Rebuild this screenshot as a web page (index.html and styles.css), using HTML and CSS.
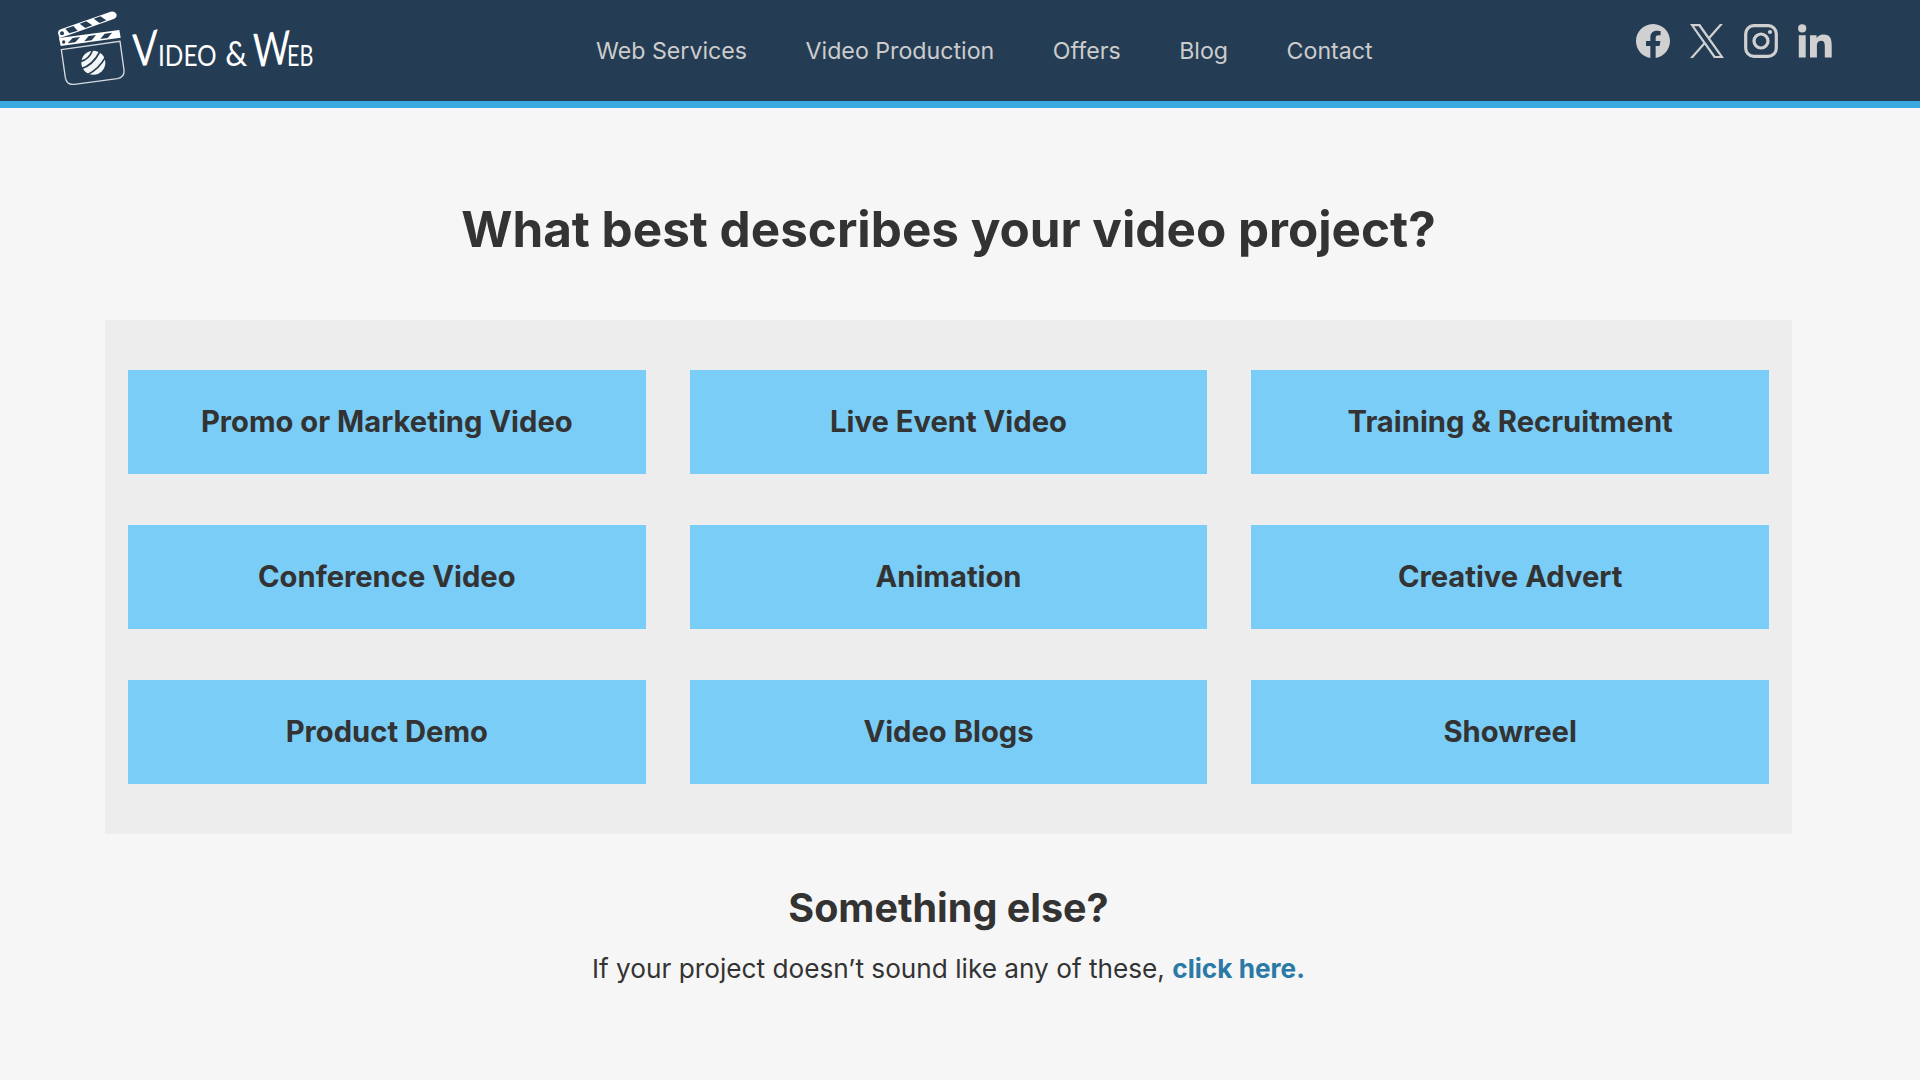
FILE: index.html
```html
<!DOCTYPE html>
<html lang="en">
<head>
    <meta charset="UTF-8">
    <meta name="viewport" content="width=device-width, initial-scale=1.0">
    <title>Start a Video Project | Video &amp; Web</title>
    <link rel="stylesheet" href="styles.css">
</head>
<body>
    <header class="header">
        <a href="#" class="logo" aria-label="Video &amp; Web">
            <svg viewBox="0 0 900 300">
                <!-- clapper arm -->
                <path d="M54 98 Q54 91 62 88 L212 35 Q225 33 230 44 Q231 52 223 56 L78 108 L58 114 Z" fill="#fff"/>
                <g class="logo-dark">
                    <path d="M76 86 L100 78 L113 92 L88 100 Z"/>
                    <path d="M119 71 L139 64 L157 76 L136 84 Z"/>
                    <path d="M161 56 L181 49 L199 61 L179 69 Z"/>
                    <circle cx="66" cy="100" r="6"/>
                </g>
                <!-- slate bar -->
                <path d="M57 114 L238 90 L242 113 L62 138 Z" fill="#fff"/>
                <g class="logo-dark">
                    <path d="M98 114 L120 111 L106 127 L83 130 Z"/>
                    <path d="M146 108 L168 105 L155 121 L133 124 Z"/>
                    <path d="M194 101 L216 98 L203 114 L181 117 Z"/>
                    <circle cx="71" cy="126" r="5"/>
                </g>
                <path class="logo-line" d="M64 149 L240 124 L252 210 Q254 232 232 236 L103 253 Q80 256 76 233 Z"/>
                <!-- striped ball -->
                <circle cx="160" cy="188" r="36" fill="#f4f5f7"/>
                <g class="logo-ball">
                    <path d="M122 184 Q146 180 158 150"/>
                    <path d="M124 206 Q158 196 179 156"/>
                    <path d="M142 224 Q176 208 196 172"/>
                </g>
                <g class="logo-text">
                    <text x="276" y="197" font-size="140" textLength="77" lengthAdjust="spacingAndGlyphs" transform="translate(0 66.5) skewY(-12)">V</text>
                    <text x="354" y="197" font-size="85" textLength="176" lengthAdjust="spacingAndGlyphs">IDEO</text>
                    <text x="556" y="197" font-size="102" textLength="66" lengthAdjust="spacingAndGlyphs">&amp;</text>
                    <text x="638" y="197" font-size="140" textLength="112" lengthAdjust="spacingAndGlyphs" transform="translate(0 72.6) skewY(-6)">W</text>
                    <text x="741" y="197" font-size="85" textLength="79" lengthAdjust="spacingAndGlyphs">EB</text>
                </g>
            </svg>
        </a>
        <nav class="nav">
            <a href="#">Web Services</a>
            <a href="#">Video Production</a>
            <a href="#">Offers</a>
            <a href="#">Blog</a>
            <a href="#">Contact</a>
        </nav>
        <div class="social">
            <a href="#" aria-label="Facebook">
                <svg viewBox="0 0 16 16"><path d="M16 8.049c0-4.446-3.582-8.05-8-8.05C3.58 0-.002 3.603-.002 8.05c0 4.017 2.926 7.347 6.75 7.951v-5.625h-2.03V8.05H6.75V6.275c0-2.017 1.195-3.131 3.022-3.131.876 0 1.791.157 1.791.157v1.98h-1.009c-.993 0-1.303.621-1.303 1.258v1.51h2.218l-.354 2.326H9.25V16c3.824-.604 6.75-3.934 6.75-7.951"/></svg>
            </a>
            <a href="#" aria-label="X">
                <svg viewBox="1 1 22 22"><path d="M14.095 10.316L22.286 1h-1.94l-7.116 8.088L7.551 1H1l8.59 12.231L1 23h1.94l7.51-8.543L16.449 23H23zM11.437 13.338l-.872-1.219L3.64 2.432h2.982l5.59 7.821.867 1.219 7.265 10.166h-2.981z"/></svg>
            </a>
            <a href="#" aria-label="Instagram">
                <svg viewBox="0 0 34 34">
                    <rect class="outline" x="1.7" y="1.7" width="30.6" height="30.6" rx="8"/>
                    <circle class="outline" cx="17" cy="17" r="7"/>
                    <circle cx="26" cy="8" r="2.1"/>
                </svg>
            </a>
            <a href="#" aria-label="LinkedIn">
                <svg viewBox="0 0 34 34">
                    <circle cx="4.2" cy="4.4" r="4.1"/>
                    <path d="M.8 11.2h6.9v22.3H.8zM12 11.2h6.6v3.1c1-1.9 3.3-3.7 6.8-3.7 7 0 8.3 4.6 8.3 10.6v12.3h-6.9V22.6c0-2.6 0-5.9-3.6-5.9s-4.3 2.8-4.3 5.7v11.1H12z"/>
                </svg>
            </a>
        </div>
    </header>

    <main class="content">
        <h1>What best describes your video project?</h1>
        <div class="options">
            <a href="#" class="option">Promo or Marketing Video</a>
            <a href="#" class="option">Live Event Video</a>
            <a href="#" class="option">Training &amp; Recruitment</a>
            <a href="#" class="option">Conference Video</a>
            <a href="#" class="option">Animation</a>
            <a href="#" class="option">Creative Advert</a>
            <a href="#" class="option">Product Demo</a>
            <a href="#" class="option">Video Blogs</a>
            <a href="#" class="option">Showreel</a>
        </div>
        <h2>Something else?</h2>
        <p>If your project doesn’t sound like any of these, <a href="#" class="more-link">click here.</a></p>
    </main>
</body>
</html>
```
FILE: styles.css
```css
* {
    box-sizing: border-box;
}

body {
    margin: 0;
    font-family: Inter, "Liberation Sans", sans-serif;
    background-color: #f6f6f6;
    color: #333;
}

a {
    text-decoration: none;
}

.header {
    display: flex;
    align-items: flex-start;
    height: 108px;
    padding-left: 40px;
    padding-right: 88px;
    background-color: #243d55;
    border-bottom: 7px solid #3aa9e2;
}

.logo svg {
    display: block;
    width: 300px;
    height: 100px;
}

.logo-dark {
    fill: #243d55;
}

.logo-line {
    fill: none;
    stroke: #d5dae0;
    stroke-width: 4;
}

.logo-ball {
    fill: none;
    stroke: #243d55;
    stroke-width: 5;
}

.logo-text {
    font-family: Lato, "Liberation Sans", sans-serif;
    fill: #fff;
}

.nav {
    display: flex;
    gap: 58.5px;
    margin-left: 256px;
    padding-top: 31px;
}

.nav a {
    color: #ccc;
    font-size: 23.2px;
    line-height: 40px;
    white-space: nowrap;
}

.nav a:hover {
    color: #fff;
}

.social {
    display: flex;
    gap: 20px;
    margin-left: auto;
    padding-top: 24px;
}

.social svg {
    display: block;
    width: 34px;
    height: 34px;
    fill: #d0d0d0;
}

.social .outline {
    fill: none;
    stroke: #d0d0d0;
    stroke-width: 3.2;
}

.content {
    width: 1687px;
    margin-left: 105px;
    padding-top: 91px;
    text-align: center;
}

h1 {
    margin: 0 0 61px;
    font-size: 49.4px;
    line-height: 60px;
}

.options {
    display: grid;
    grid-template-columns: repeat(3, 1fr);
    gap: 50.5px 44px;
    padding: 50px 23px;
    background-color: #ededed;
}

.option {
    height: 104.3px;
    padding-top: 32px;
    background-color: #7acdf6;
    color: #333;
    font-size: 29.2px;
    font-weight: 700;
    line-height: 40px;
}

.option:hover {
    background-color: #3aa9e2;
}

h2 {
    margin: 50px 0 17px;
    font-size: 39.5px;
    line-height: 48px;
}

p {
    margin: 0;
    font-size: 26.2px;
    line-height: 40px;
}

.more-link {
    color: #2b7aa5;
    font-weight: 700;
}
```
